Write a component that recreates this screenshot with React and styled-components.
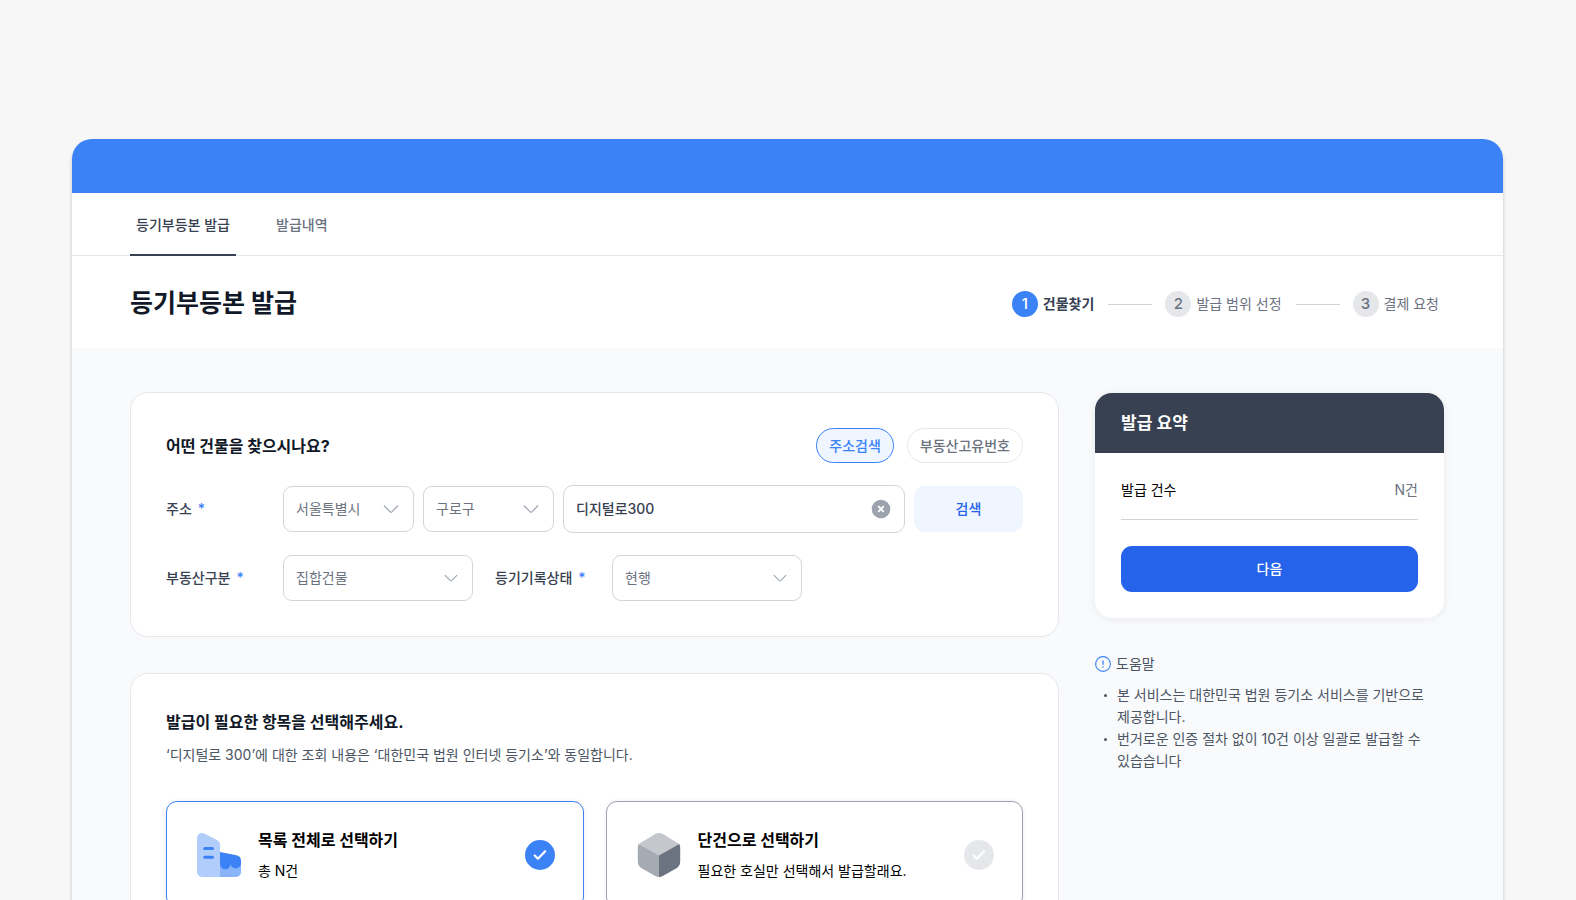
import React, { useState } from "react";
import styled, { createGlobalStyle, ThemeProvider } from "styled-components";

const theme = {
  blue: "#3b82f6",
  blueStrong: "#2563eb",
  blueSoft: "#eff6ff",
  ink: "#111827",
  slate: "#374151",
  text: "#4b5563",
  muted: "#6b7280",
  faint: "#9ca3af",
  border: "#d1d5db",
  line: "#e5e7eb",
  surface: "#f9fafc",
};

const GlobalStyle = createGlobalStyle`
  *, *::before, *::after { box-sizing: border-box; }
  body {
    margin: 0;
    background: #f7f7f7;
    color: #000;
    font-family: Inter, "Noto Sans CJK KR", sans-serif;
    font-size: 14px;
    line-height: 22px;
    word-break: keep-all;
  }
  button, input, select { font: inherit; margin: 0; }
  h1, h2, h3, p, ul, ol { margin: 0; padding: 0; }
  ul, ol { list-style: none; }
`;

const Page = styled.div`
  padding: 139px 73px 72px 72px;
`;

const Window = styled.div`
  overflow: hidden;
  border-radius: 20px;
  background: #fff;
  box-shadow: 0 3px 4px rgba(0, 0, 0, 0.2);
`;

const Banner = styled.div`
  height: 54px;
  background: ${({ theme }) => theme.blue};
`;

const Tabs = styled.nav`
  display: flex;
  gap: 36px;
  height: 63px;
  padding: 0 58px;
  border-bottom: 1px solid ${({ theme }) => theme.line};
`;

const Tab = styled.a`
  display: flex;
  align-items: center;
  margin-bottom: -1px;
  padding: 2px 4px 0;
  min-width: ${({ $active }) => ($active ? "106px" : "0")};
  justify-content: center;
  border-bottom: 2px solid ${({ $active, theme }) => ($active ? theme.slate : "transparent")};
  color: ${({ $active, theme }) => ($active ? theme.slate : theme.muted)};
  font-weight: 500;
  text-decoration: none;
`;

const Heading = styled.header`
  display: flex;
  align-items: center;
  justify-content: space-between;
  min-height: 92px;
  padding: 4px 59px 0 58px;
`;

const PageTitle = styled.h1`
  padding-bottom: 2px;
  color: ${({ theme }) => theme.ink};
  font-size: 25px;
  font-weight: 700;
  line-height: 36px;
`;

const Steps = styled.ol`
  display: flex;
  align-items: center;
  gap: 14px;
  padding-right: 5px;
`;

const Step = styled.li`
  display: flex;
  align-items: center;
  gap: 5px;
  color: ${({ $active, theme }) => ($active ? theme.slate : theme.muted)};
  font-weight: ${({ $active }) => ($active ? 600 : 400)};

  &:not(:first-child)::before {
    content: "";
    width: 44px;
    height: 1px;
    margin-right: 8px;
    background: ${({ theme }) => theme.border};
  }
`;

const StepNumber = styled.span`
  display: grid;
  place-items: center;
  width: 26px;
  height: 26px;
  border-radius: 50%;
  background: ${({ $active, theme }) => ($active ? theme.blue : theme.line)};
  color: ${({ $active, theme }) => ($active ? "#fff" : theme.muted)};
  font-size: 15px;
  font-weight: 500;
`;

const Body = styled.div`
  display: grid;
  grid-template-columns: minmax(0, 1fr) 349px;
  align-items: start;
  gap: 36px;
  padding: 44px 59px 60px 58px;
  background: ${({ theme }) => theme.surface};
`;

const Column = styled.main`
  display: grid;
  gap: 36px;
`;

const Card = styled.section`
  display: grid;
  gap: 22px;
  padding: 35px;
  border: 1px solid ${({ theme }) => theme.line};
  border-radius: 18px;
  background: #fff;
`;

const CardHeader = styled.div`
  display: flex;
  align-items: center;
  justify-content: space-between;
`;

const CardTitle = styled.h2`
  color: ${({ theme }) => theme.ink};
  font-size: 16px;
  font-weight: 700;
  line-height: 26px;
`;

const Pills = styled.div`
  display: flex;
  gap: 13px;
`;

const Pill = styled.button`
  height: 35px;
  padding: 0 12px;
  border: 1px solid ${({ $active, theme }) => ($active ? theme.blue : theme.line)};
  border-radius: 18px;
  background: ${({ $active, theme }) => ($active ? theme.blueSoft : "#fff")};
  color: ${({ $active, theme }) => ($active ? theme.blue : theme.muted)};
  font-weight: 500;
`;

const Row = styled.div`
  display: flex;
  align-items: center;
`;

const FieldLabel = styled.label`
  flex: 0 0 117px;
  color: ${({ theme }) => theme.slate};
  font-weight: 500;
`;

const Required = styled.span`
  margin-left: 6px;
  color: ${({ theme }) => theme.blue};
`;

const AddressFields = styled.div`
  display: grid;
  grid-template-columns: 131px 131px minmax(0, 1fr) 109px;
  align-items: center;
  gap: 9px;
  flex: 1;
`;

const SelectBox = styled.div`
  display: grid;
  grid-template-columns: minmax(0, 1fr);
  align-items: center;
  flex: 0 0 190px;

  & + ${FieldLabel} { margin-left: 22px; }
  & > * { grid-area: 1 / 1; }
  & > svg { justify-self: end; margin-right: 15px; pointer-events: none; }
`;

const SelectInput = styled.select`
  width: 100%;
  height: 46px;
  padding: 0 12px;
  appearance: none;
  border: 1px solid ${({ theme }) => theme.border};
  border-radius: 9px;
  background: #fff;
  color: ${({ theme }) => theme.muted};
`;

const SearchBox = styled.div`
  display: flex;
  align-items: center;
  height: 48px;
  padding: 0 13px 0 12px;
  border: 1px solid ${({ theme }) => theme.border};
  border-radius: 10px;
  background: #fff;
`;

const SearchInput = styled.input`
  flex: 1;
  min-width: 0;
  padding: 0;
  border: 0;
  outline: 0;
  background: none;
  color: ${({ theme }) => theme.slate};
  font-weight: 500;
`;

const ClearButton = styled.button`
  display: grid;
  padding: 0;
  border: 0;
  background: none;
`;

const Button = styled.button`
  width: 100%;
  height: 46px;
  border: 0;
  border-radius: 11px;
  background: ${({ $primary, theme }) => ($primary ? theme.blueStrong : theme.blueSoft)};
  color: ${({ $primary, theme }) => ($primary ? "#fff" : theme.blueStrong)};
  font-weight: 500;
`;

const CardLead = styled.div`
  display: grid;
  gap: 9px;
  padding-bottom: 13px;
  color: ${({ theme }) => theme.text};
`;

const Options = styled.div`
  display: grid;
  grid-template-columns: repeat(2, minmax(0, 1fr));
  gap: 22px;
`;

const Option = styled.label`
  display: flex;
  align-items: center;
  gap: 17px;
  min-height: 107px;
  padding: 0 28px 0 30px;
  border: 1px solid ${({ $active, theme }) => ($active ? theme.blue : theme.faint)};
  border-radius: 11px;
  background: #fff;
  box-shadow: 0 0 4px rgba(17, 24, 39, 0.08);
`;

const OptionText = styled.span`
  display: grid;
  gap: 8px;
  flex: 1;
`;

const OptionName = styled.strong`
  font-size: 16px;
  font-weight: 700;
  line-height: 24px;
`;

const RadioBox = styled.span`
  display: grid;
  place-items: center;

  & > * { grid-area: 1 / 1; }
  & > svg { pointer-events: none; }
`;

const Radio = styled.input`
  width: 30px;
  height: 30px;
  appearance: none;
  border-radius: 50%;
  background: ${({ theme }) => theme.line};

  &:checked { background: ${({ theme }) => theme.blue}; }
`;

const Aside = styled.aside`
  display: grid;
  gap: 35px;
  padding-top: 1px;
`;

const Summary = styled.section`
  overflow: hidden;
  border-radius: 17px;
  background: #fff;
  box-shadow: 0 1px 8px rgba(17, 24, 39, 0.07);
`;

const SummaryTitle = styled.h2`
  padding: 18px 26px;
  background: ${({ theme }) => theme.slate};
  color: #fff;
  font-size: 17px;
  font-weight: 600;
  line-height: 24px;
`;

const SummaryBody = styled.div`
  display: grid;
  gap: 26px;
  padding: 26px;
`;

const SummaryRow = styled.div`
  display: flex;
  justify-content: space-between;
  padding-bottom: 18px;
  border-bottom: 1px solid ${({ theme }) => theme.border};
`;

const Count = styled.span`
  color: ${({ theme }) => theme.muted};
`;

const Help = styled.section`
  display: grid;
  gap: 9px;
  color: ${({ theme }) => theme.text};
`;

const HelpTitle = styled.h3`
  display: flex;
  align-items: center;
  gap: 5px;
  font-size: 14px;
  font-weight: 400;
  line-height: 22px;
`;

const HelpItem = styled.li`
  display: flex;
  padding-right: 8px;

  &::before {
    content: "";
    flex: none;
    width: 3px;
    height: 3px;
    margin: 10px 10px 0 9px;
    border-radius: 50%;
    background: ${({ theme }) => theme.text};
  }
`;

const Chevron = ({ size }) => (
  <svg width={size} height={size} viewBox="0 0 16 16" fill="none" stroke="#9ca3af" strokeWidth="1.2" strokeLinecap="round" strokeLinejoin="round" aria-hidden="true">
    <path d="M1.3 5 7 10.7q1 .9 2 0L14.7 5" />
  </svg>
);

const ClearIcon = () => (
  <svg width="20" height="20" viewBox="0 0 20 20" aria-hidden="true">
    <circle cx="10" cy="10" r="9.3" fill="#9ca3af" />
    <path d="m7.2 7.2 5.6 5.6m0-5.6-5.6 5.6" stroke="#fff" strokeWidth="1.8" />
  </svg>
);

const Check = () => (
  <svg width="14" height="12" viewBox="0 0 14 12" fill="none" stroke="#fff" strokeWidth="2.2" strokeLinecap="round" strokeLinejoin="round" aria-hidden="true">
    <path d="m1.700 6.500 3.200 3.200L12.200 2.200" />
  </svg>
);

const HelpIcon = () => (
  <svg width="16" height="16" viewBox="0 0 16 16" fill="none" stroke="#3b82f6" aria-hidden="true">
    <circle cx="8" cy="8" r="7.4" strokeWidth="1.1" />
    <path d="M8 4.4v4.3" strokeWidth="1.3" />
    <circle cx="8" cy="11" r=".8" fill="#3b82f6" stroke="none" />
  </svg>
);

const BuildingIcon = () => (
  <svg width="44" height="44" viewBox="0 0 44 44" aria-hidden="true">
    <path d="M23 28h21v11a5 5 0 0 1-5 5H23z" fill="#89b4fa" />
    <path d="M0 5a5 5 0 0 1 7.2-4.5L20 7a5.500 5.500 0 0 1 3 5v32H5a5 5 0 0 1-5-5z" fill="#b1cdfb" />
    <path d="M23 19l16.500 3.200A5.600 5.600 0 0 1 44 27.800v1.200a5.250 5.250 0 0 1-10.500 2 5.250 5.250 0 0 1-10.500 0z" fill="#3b82f6" />
    <path d="M7.700 15.500h7.800M7.700 24.200h7.800" stroke="#3b82f6" strokeWidth="3" strokeLinecap="round" />
  </svg>
);

const CubeIcon = () => (
  <svg width="44" height="44" viewBox="0 0 44 44" aria-hidden="true">
    <path d="M1.700 11 17.700 1.300a8.500 8.500 0 0 1 8.600 0L42.300 11 22 23z" fill="#c4c7cc" />
    <path d="M1.700 11 22 22.500V44q-2.200 0-4.200-1.200L5 35.500A8.500 8.500 0 0 1 .800 28.200V14.600q0-2 .900-3.600z" fill="#a6aab3" />
    <path d="M42.300 11 22 22.500V44q2.200 0 4.200-1.200L39 35.500a8.500 8.500 0 0 0 4.200-7.300V14.600q0-2-.900-3.600z" fill="#6b7280" />
  </svg>
);

const STEPS = ["건물찾기", "발급 범위 선정", "결제 요청"];

const OPTIONS = [
  { id: "all", name: "목록 전체로 선택하기", note: "총 N건", Icon: BuildingIcon },
  { id: "single", name: "단건으로 선택하기", note: "필요한 호실만 선택해서 발급할래요.", Icon: CubeIcon },
];

function Select({ id, label, options, iconSize = 14 }) {
  return (
    <SelectBox>
      <SelectInput id={id} aria-label={label}>
        {options.map((option) => (
          <option key={option}>{option}</option>
        ))}
      </SelectInput>
      <Chevron size={iconSize} />
    </SelectBox>
  );
}

export default function App() {
  const [mode, setMode] = useState("주소검색");
  const [query, setQuery] = useState("디지털로300");
  const [choice, setChoice] = useState("all");

  return (
    <ThemeProvider theme={theme}>
      <GlobalStyle />
      <Page>
        <Window>
          <Banner />
          <Tabs>
            <Tab href="#issue" $active aria-current="page">등기부등본 발급</Tab>
            <Tab href="#history">발급내역</Tab>
          </Tabs>
          <Heading>
            <PageTitle>등기부등본 발급</PageTitle>
            <Steps>
              {STEPS.map((name, index) => (
                <Step key={name} $active={index === 0}>
                  <StepNumber $active={index === 0}>{index + 1}</StepNumber>
                  {name}
                </Step>
              ))}
            </Steps>
          </Heading>
          <Body>
            <Column>
              <Card>
                <CardHeader>
                  <CardTitle>어떤 건물을 찾으시나요?</CardTitle>
                  <Pills>
                    {["주소검색", "부동산고유번호"].map((name) => (
                      <Pill key={name} type="button" $active={mode === name} aria-pressed={mode === name} onClick={() => setMode(name)}>
                        {name}
                      </Pill>
                    ))}
                  </Pills>
                </CardHeader>
                <Row>
                  <FieldLabel htmlFor="address">주소<Required>*</Required></FieldLabel>
                  <AddressFields>
                    <Select label="시/도" options={["서울특별시"]} iconSize={16} />
                    <Select label="시/군/구" options={["구로구"]} iconSize={16} />
                    <SearchBox>
                      <SearchInput id="address" type="text" value={query} onChange={(event) => setQuery(event.target.value)} />
                      <ClearButton type="button" aria-label="지우기" onClick={() => setQuery("")}>
                        <ClearIcon />
                      </ClearButton>
                    </SearchBox>
                    <Button type="button">검색</Button>
                  </AddressFields>
                </Row>
                <Row>
                  <FieldLabel htmlFor="kind">부동산구분<Required>*</Required></FieldLabel>
                  <Select id="kind" options={["집합건물"]} />
                  <FieldLabel htmlFor="state">등기기록상태<Required>*</Required></FieldLabel>
                  <Select id="state" options={["현행"]} />
                </Row>
              </Card>
              <Card>
                <CardLead>
                  <CardTitle>발급이 필요한 항목을 선택해주세요.</CardTitle>
                  <p>‘디지털로 300’에 대한 조회 내용은 ‘대한민국 법원 인터넷 등기소’와 동일합니다.</p>
                </CardLead>
                <Options>
                  {OPTIONS.map(({ id, name, note, Icon }) => (
                    <Option key={id} $active={choice === id}>
                      <Icon />
                      <OptionText>
                        <OptionName>{name}</OptionName>
                        <span>{note}</span>
                      </OptionText>
                      <RadioBox>
                        <Radio type="radio" name="scope" value={id} checked={choice === id} onChange={() => setChoice(id)} />
                        <Check />
                      </RadioBox>
                    </Option>
                  ))}
                </Options>
              </Card>
            </Column>
            <Aside>
              <Summary>
                <SummaryTitle>발급 요약</SummaryTitle>
                <SummaryBody>
                  <SummaryRow>
                    <span>발급 건수</span>
                    <Count>N건</Count>
                  </SummaryRow>
                  <Button type="button" $primary>다음</Button>
                </SummaryBody>
              </Summary>
              <Help>
                <HelpTitle><HelpIcon />도움말</HelpTitle>
                <ul>
                  <HelpItem>본 서비스는 대한민국 법원 등기소 서비스를 기반으로 제공합니다.</HelpItem>
                  <HelpItem>번거로운 인증 절차 없이 10건 이상 일괄로 발급할 수 있습습니다</HelpItem>
                </ul>
              </Help>
            </Aside>
          </Body>
        </Window>
      </Page>
    </ThemeProvider>
  );
}
